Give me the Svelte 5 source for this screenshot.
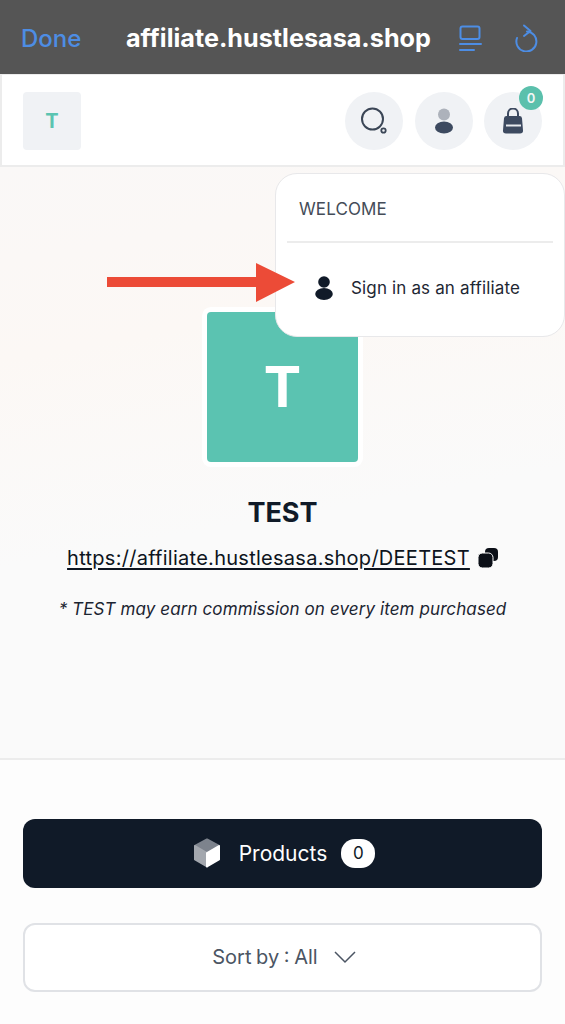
<script>
  let title = 'TEST';
  let link = 'https://affiliate.hustlesasa.shop/DEETEST';
  let productCount = 0;
  let cartCount = 0;
</script>

<div class="page">
  <div class="browser-bar">
    <span class="done">Done</span>
    <span class="host">affiliate.hustlesasa.shop</span>
    <div class="bar-icons">
      <svg width="24" height="28" viewBox="0 0 24 28" fill="none" stroke="#4d8de4" stroke-width="2" stroke-linecap="round">
        <rect x="1.500" y="2.500" width="19" height="12.500" rx="2"/>
        <path d="M1 20h21M1 26h14"/>
      </svg>
      <svg width="26" height="28" viewBox="0 0 26 28" fill="none" stroke="#4d8de4" stroke-width="2" stroke-linecap="round" stroke-linejoin="round">
        <path d="M13 7.500A10 10 0 1 1 3 14"/>
        <path d="M10 1.500l6.500 5.500-6.500 5"/>
      </svg>
    </div>
  </div>

  <header class="top">
    <div class="logo-small">T</div>
    <div class="top-icons">
      <div class="round">
        <svg width="28" height="30" viewBox="0 0 28 30" fill="none" stroke="#3b4656">
          <circle cx="12.500" cy="13" r="10.500" stroke-width="2"/>
          <circle cx="23.500" cy="24.500" r="2.200" stroke-width="1.800"/>
        </svg>
      </div>
      <div class="round">
        <svg width="20" height="26" viewBox="0 0 20 26">
          <circle cx="10" cy="6.500" r="6" fill="#adb2bb"/>
          <ellipse cx="10" cy="19.500" rx="9" ry="6" fill="#3d4a60"/>
        </svg>
      </div>
      <div class="round">
        <svg width="22" height="26" viewBox="0 0 22 26">
          <path d="M6 9V5.500a5 5 0 0 1 10 0V9" fill="none" stroke="#3d4a60" stroke-width="2"/>
          <path d="M4.500 8h13a2.500 2.500 0 0 1 2.500 2.200l1 12a3 3 0 0 1-3 3.300H4a3 3 0 0 1-3-3.300l1-12A2.500 2.500 0 0 1 4.500 8z" fill="#3d4a60"/>
          <path d="M4 17.500h15" stroke="#e8ebef" stroke-width="2"/>
        </svg>
        <span class="cart-badge">{cartCount}</span>
      </div>
    </div>
  </header>

  <section class="hero">
    <div class="logo-large">T</div>
    <h1>{title}</h1>
    <div class="link-row">
      <span class="link">{link}</span>
      <svg width="20" height="20" viewBox="0 0 20 20" fill="#0b0f17">
        <rect x="7" y="0" width="13" height="13" rx="4"/>
        <rect x="0" y="5" width="15" height="15" rx="4.500" stroke="#fafafa" stroke-width="1"/>
      </svg>
    </div>
    <p class="note">* {title} may earn commission on every item purchased</p>

    <div class="menu">
      <div class="menu-title">WELCOME</div>
      <div class="menu-item">
        <svg width="18" height="24" viewBox="0 0 18 24" fill="#101a28">
          <circle cx="9" cy="6" r="5.800"/>
          <ellipse cx="9" cy="18" rx="8.800" ry="6"/>
        </svg>
        <span>Sign in as an affiliate</span>
      </div>
    </div>

    <svg class="arrow" width="190" height="40" viewBox="0 0 190 40">
      <path d="M0 14h149V0l39 19-39 20V24H0z" fill="#ec4b37"/>
    </svg>
  </section>

  <main class="actions">
    <button class="products">
      <svg class="cube" width="28" height="30" viewBox="0 0 28 30" stroke-width="2" stroke-linejoin="round">
        <path d="M14 1.500l12 6.500-12 7-12-7z" fill="#7d838d" stroke="#7d838d"/>
        <path d="M2 8l12 7v13.500l-12-7z" fill="#a3a7ae" stroke="#a3a7ae"/>
        <path d="M26 8l-12 7v13.500l12-7z" fill="#fff" stroke="#fff"/>
      </svg>
      <span class="label">Products</span>
      <span class="count">{productCount}</span>
    </button>
    <button class="sort">
      <span>Sort by : All</span>
      <svg width="24" height="14" viewBox="0 0 24 14" fill="none" stroke="#4b5563" stroke-width="1.500">
        <path d="M2 2l10 10L22 2"/>
      </svg>
    </button>
  </main>
</div>

<style>
  :global(body) {
    margin: 0;
    background: #fdfdfd;
  }

  .page {
    width: 565px;
    height: 1024px;
    overflow: hidden;
    font-family: Inter, "Liberation Sans", sans-serif;
    color: #101a28;
  }

  .browser-bar {
    height: 74px;
    background: #555555;
    display: flex;
    align-items: center;
    padding: 2px 25px 0 21px;
    box-sizing: border-box;
  }

  .done {
    color: #4d8de4;
    font-size: 24px;
    font-weight: 500;
    width: 105px;
  }

  .host {
    color: #fff;
    font-size: 25.200px;
    font-weight: 700;
    white-space: nowrap;
  }

  .bar-icons {
    margin-left: auto;
    display: flex;
    gap: 31px;
  }

  .top {
    height: 93px;
    box-sizing: border-box;
    background: #fff;
    border: 1px solid #ececec;
    border-width: 1px 2px 2px;
    display: flex;
    align-items: center;
    justify-content: space-between;
    padding: 1px 21px 0;
  }

  .logo-small {
    width: 58px;
    height: 58px;
    border-radius: 4px;
    background: #f0f2f5;
    color: #5bc4b1;
    font-size: 20px;
    font-weight: 700;
    display: flex;
    align-items: center;
    justify-content: center;
  }

  .top-icons {
    display: flex;
    gap: 11.500px;
  }

  .round {
    position: relative;
    width: 58px;
    height: 58px;
    border-radius: 50%;
    background: #f0f2f5;
    display: flex;
    align-items: center;
    justify-content: center;
  }

  .cart-badge {
    position: absolute;
    top: -6px;
    right: -1px;
    width: 24px;
    height: 24px;
    border-radius: 50%;
    background: #5bc0ac;
    color: #f3f6f5;
    font-size: 13px;
    font-weight: 600;
    display: flex;
    align-items: center;
    justify-content: center;
  }

  .hero {
    position: relative;
    height: 593px;
    box-sizing: border-box;
    padding-top: 145px;
    border-bottom: 2px solid #ececec;
    background: linear-gradient(170deg, #faf8f7 0%, #fcf8f5 28%, #fafafa 58%, #fafafa 100%);
    display: flex;
    flex-direction: column;
    align-items: center;
  }

  .logo-large {
    width: 151px;
    height: 150px;
    border-radius: 4px;
    background: #5bc3b1;
    box-shadow: 0 0 0 5px #fff;
    color: #fff;
    font-size: 56px;
    font-weight: 700;
    display: flex;
    align-items: center;
    justify-content: center;
  }

  h1 {
    margin: 31px 0 0;
    font-size: 27px;
    line-height: 40px;
    font-weight: 700;
  }

  .link-row {
    margin-top: 11px;
    display: flex;
    align-items: center;
    gap: 8px;
  }

  .link {
    font-size: 20px;
    line-height: 28px;
    letter-spacing: 0.27px;
    text-decoration: underline;
    text-underline-offset: 3px;
    color: #0d1420;
  }

  .note {
    margin: 25px 0 0;
    font-size: 17px;
    line-height: 24px;
    letter-spacing: 0.1px;
    font-style: italic;
    color: #1b2431;
  }

  .menu {
    position: absolute;
    top: 6px;
    right: 0;
    width: 290px;
    height: 164px;
    box-sizing: border-box;
    background: #fff;
    border: 1px solid #e8e8ea;
    border-radius: 22px;
    padding: 0 11px;
  }

  .menu-title {
    height: 69px;
    box-sizing: border-box;
    padding: 25px 0 0 12px;
    border-bottom: 2px solid #ececec;
    font-size: 17px;
    line-height: 20px;
    letter-spacing: 0.1px;
    color: #444c58;
  }

  .menu-item {
    display: flex;
    align-items: center;
    gap: 18px;
    padding: 33px 0 0 28px;
    font-size: 17px;
    line-height: 24px;
    letter-spacing: 0.15px;
    color: #1e2733;
  }

  .arrow {
    position: absolute;
    left: 107px;
    top: 96px;
  }

  .actions {
    padding: 59px 23px 0;
    display: flex;
    flex-direction: column;
    gap: 35px;
  }

  button {
    width: 100%;
    height: 69px;
    border-radius: 12px;
    font-family: inherit;
    display: flex;
    align-items: center;
    justify-content: center;
  }

  .products {
    background: #101a28;
    border: none;
    color: #fff;
    font-size: 21px;
    padding: 0 0 1px 3px;
  }

  .label {
    margin: 0 14px 0 18px;
  }

  .count {
    width: 34px;
    height: 29px;
    border-radius: 14px;
    background: #fff;
    color: #101a28;
    font-size: 17px;
    display: flex;
    align-items: center;
    justify-content: center;
  }

  .sort {
    background: #fff;
    border: 2px solid #e0e2e6;
    color: #4b5563;
    font-size: 20px;
    word-spacing: -1px;
    gap: 15px;
    padding: 0 0 2px 4px;
  }
</style>
